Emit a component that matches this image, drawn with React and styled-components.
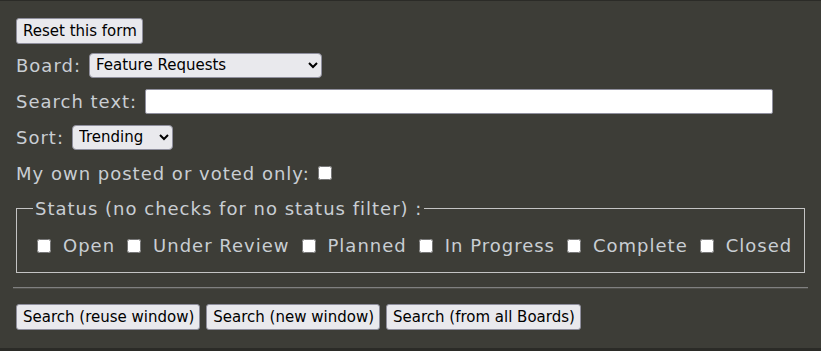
import React from "react";
import styled, { createGlobalStyle } from "styled-components";

const GlobalStyle = createGlobalStyle`
  html, body {
    margin: 0;
    padding: 0;
    background: #2b2b27;
  }
  body {
    font-family: "DejaVu Sans", Verdana, sans-serif;
  }
`;

const Panel = styled.form`
  margin-top: 1px;
  height: 347px;
  box-sizing: border-box;
  background: #3d3d37;
  padding: 16px 13px 0 16px;
  color: #c9ced3;
`;

const Row = styled.div`
  display: flex;
  align-items: center;
  gap: 8px;
  height: 36px;
  font-size: 18px;
  letter-spacing: 1px;
`;

const FirstRow = styled(Row)`
  height: 28px;
  margin-bottom: 2px;
`;

const Button = styled.button`
  font-family: "DejaVu Sans", Verdana, sans-serif;
  font-size: 15px;
  height: 26px;
  padding: 0 5px 0 6px;
  background: #e9e9ed;
  color: #000;
  border: 1px solid #8f8f9d;
  border-radius: 3px;
  letter-spacing: 0;
`;

const Select = styled.select`
  font-family: "DejaVu Sans", Verdana, sans-serif;
  font-size: 15px;
  letter-spacing: 0;
  height: 25px;
  width: ${(p) => p.$w}px;
  background: #e9e9ed;
  color: #000;
  border: 1px solid #8f8f9d;
  border-radius: 4px;
  padding: 0 2px;
`;

const TextInput = styled.input`
  width: 628px;
  height: 25px;
  box-sizing: border-box;
  border: 1px solid #8f8f9d;
  border-radius: 2px;
  background: #fff;
`;

const Check = styled.input`
  width: 14px;
  height: 14px;
  margin: 0;
  accent-color: #fff;
`;

const Fieldset = styled.fieldset`
  margin: 7px 0 0 0;
  width: 789px;
  box-sizing: border-box;
  height: 75px;
  border: 1px solid #c4c4c4;
  padding: 0 0 0 20px;
  display: flex;
  align-items: center;
  gap: 12px;
  font-size: 18px;
  letter-spacing: 1px;
`;

const Legend = styled.legend`
  padding: 0 2px;
  margin-left: -4px;
`;

const Option = styled.label`
  display: flex;
  align-items: center;
  gap: 12px;
`;

const Rule = styled.hr`
  margin: 14px 0 0 -3px;
  width: 795px;
  border: 0;
  border-top: 1px solid #808080;
  border-bottom: 1px solid #4f4f4a;
`;

const Actions = styled.div`
  display: flex;
  gap: 6px;
  margin-top: 15px;
`;

const statuses = ["Open", "Under Review", "Planned", "In Progress", "Complete", "Closed"];

export default function App() {
  return (
    <>
      <GlobalStyle />
      <Panel onSubmit={(e) => e.preventDefault()}>
        <FirstRow>
          <Button type="button">Reset this form</Button>
        </FirstRow>
        <Row>
          Board:
          <Select $w={233} defaultValue="fr">
            <option value="fr">Feature Requests</option>
          </Select>
        </Row>
        <Row>
          Search text:
          <TextInput type="text" />
        </Row>
        <Row>
          Sort:
          <Select $w={101} defaultValue="t">
            <option value="t">Trending</option>
          </Select>
        </Row>
        <Row>
          My own posted or voted only:
          <Check type="checkbox" />
        </Row>
        <Fieldset>
          <Legend>Status (no checks for no status filter) :</Legend>
          {statuses.map((s) => (
            <Option key={s}>
              <Check type="checkbox" />
              {s}
            </Option>
          ))}
        </Fieldset>
        <Rule />
        <Actions>
          <Button type="button">Search (reuse window)</Button>
          <Button type="button">Search (new window)</Button>
          <Button type="button">Search (from all Boards)</Button>
        </Actions>
      </Panel>
    </>
  );
}
